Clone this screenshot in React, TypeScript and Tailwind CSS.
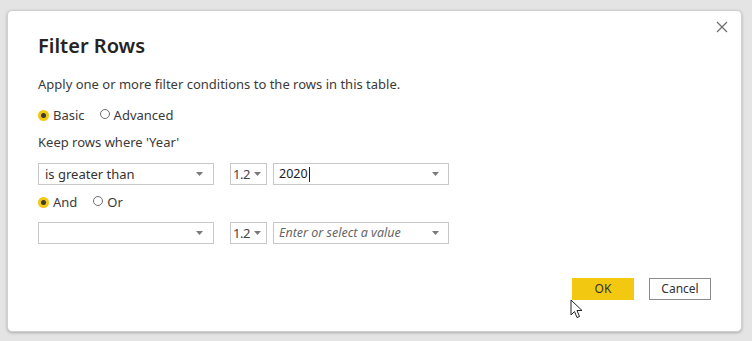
import React from 'react';

const font = { fontFamily: '"Noto Sans", "Open Sans", sans-serif' };

const Chevron: React.FC = () => (
    <svg width="7" height="4" viewBox="0 0 7 4" className="shrink-0">
        <path d="M0 0 L7 0 L3.5 4 Z" fill="#7a7a7a" />
    </svg>
);

const Radio: React.FC<{ checked?: boolean; label: string }> = ({ checked, label }) => (
    <div className="flex items-center gap-[4px]">
        {checked ? (
            <span className="w-[11px] h-[11px] rounded-full bg-[#f2c811] flex items-center justify-center">
                <span className="w-[5px] h-[5px] rounded-full bg-[#3a3a3a]" />
            </span>
        ) : (
            <span className="w-[10px] h-[10px] rounded-full border border-[#6e6e6e] bg-white -mt-[3px]" />
        )}
        <span className="text-[13px] text-[#3b3a39] leading-[18px]">{label}</span>
    </div>
);

interface RowProps {
    op: string;
    value: string;
    placeholder?: boolean;
    cursor?: boolean;
}

const ConditionRow: React.FC<RowProps> = ({ op, value, placeholder, cursor }) => (
    <div className="flex items-center h-[22px]">
        <div className="w-[176px] h-[22px] border border-[#c8c8c8] bg-white flex items-center justify-between pl-[6px] pr-[10px]">
            <span className="text-[13px] text-[#333] leading-[18px]">{op}</span>
            <Chevron />
        </div>
        <div className="ml-[16px] w-[37px] h-[22px] border border-[#c8c8c8] bg-white flex items-center justify-between pl-[2px] pr-[5px]">
            <span className="text-[13px] text-[#444] leading-[18px] tracking-[-0.5px]">1.2</span>
            <Chevron />
        </div>
        <div className="ml-[6px] w-[176px] h-[22px] border border-[#c8c8c8] bg-white flex items-center justify-between pl-[5px] pr-[9px]">
            <span
                className={
                    placeholder
                        ? 'text-[12.5px] italic text-[#666] leading-[18px]'
                        : 'text-[12.5px] text-[#222] leading-[18px] flex items-center'
                }
            >
                {value}
                {cursor && <span className="inline-block w-[1px] h-[15px] bg-[#222] ml-[1px]" />}
            </span>
            <Chevron />
        </div>
    </div>
);

const App: React.FC = () => {
    return (
        <div className="w-[752px] h-[341px] bg-[#e4e4e4] pt-[10px] pl-[7px]" style={font}>
            <div className="relative w-[735px] h-[322px] bg-white rounded-[5px] border border-[#cfcfcf] shadow-[0_1px_3px_rgba(0,0,0,0.25)] px-[30px] pt-[23px] flex flex-col">
                <button className="absolute right-[10px] top-[7px] w-[18px] h-[18px] flex items-center justify-center">
                    <svg width="12" height="12" viewBox="0 0 12 12">
                        <path d="M1 1 L11 11 M11 1 L1 11" stroke="#6b6b6b" strokeWidth="1.2" />
                    </svg>
                </button>

                <h1 className="text-[20px] font-semibold text-[#252423] leading-[24px]">Filter Rows</h1>

                <p className="mt-[17px] text-[13px] text-[#3b3a39] leading-[18px]">
                    Apply one or more filter conditions to the rows in this table.
                </p>

                <div className="mt-[13px] flex items-center gap-[15px]">
                    <Radio checked label="Basic" />
                    <Radio label="Advanced" />
                </div>

                <p className="mt-[9px] text-[13px] text-[#3b3a39] leading-[18px]">Keep rows where 'Year'</p>

                <div className="mt-[12px]">
                    <ConditionRow op="is greater than" value="2020" cursor />
                </div>

                <div className="mt-[8px] flex items-center gap-[16px]">
                    <Radio checked label="And" />
                    <Radio label="Or" />
                </div>

                <div className="mt-[11px]">
                    <ConditionRow op="" value="Enter or select a value" placeholder />
                </div>

                <div className="mt-[34px] flex justify-end gap-[15px]">
                    <button className="relative w-[62px] h-[22px] bg-[#f2c811] text-[12px] text-[#333]">
                        OK
                        <svg
                            className="absolute left-[-2px] top-[21px]"
                            width="14"
                            height="21"
                            viewBox="0 0 14 21"
                        >
                            <path
                                d="M1 1 L1 16 L4.5 12.5 L7 18.5 L9.5 17.5 L7 11.5 L12 11.5 Z"
                                fill="white"
                                stroke="#222"
                                strokeWidth="1"
                                strokeLinejoin="round"
                            />
                        </svg>
                    </button>
                    <button className="w-[62px] h-[22px] bg-white border border-[#8a8a8a] text-[12px] text-[#333]">
                        Cancel
                    </button>
                </div>
            </div>
        </div>
    );
};

export default App;
